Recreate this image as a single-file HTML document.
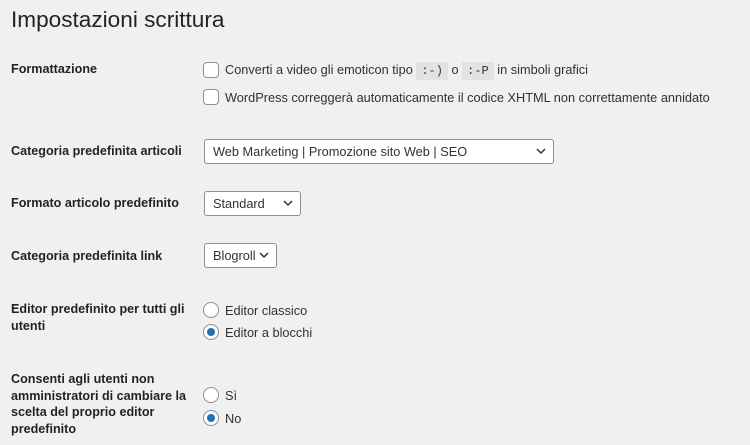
<!DOCTYPE html><html><head><style>
body{margin:0;width:750px;height:445px;background:#f0f0f1;font-family:"Liberation Sans",sans-serif;color:#1d2327;position:relative;overflow:hidden;font-size:12.75px}
.a{position:absolute;white-space:nowrap}
h1{position:absolute;left:11px;top:7px;margin:0;font-size:22.6px;font-weight:400;color:#1d2327}
.l{font-weight:700;font-size:12.6px;color:#1d2327}
.t{color:#2c3338}
.cb{position:absolute;width:14px;height:14px;border:1px solid #8c8f94;border-radius:4px;background:#fff}
.r{position:absolute;width:14px;height:14px;border:1px solid #8c8f94;border-radius:50%;background:#fff}
.r.on::after{content:"";position:absolute;left:3px;top:3px;width:8px;height:8px;border-radius:50%;background:#2271b1}
.s{position:absolute;border:1px solid #8c8f94;border-radius:3px;background:#fff;box-sizing:border-box;height:25px;padding-left:8px;line-height:23px;color:#2c3338}
.s svg{position:absolute;right:7px;top:8px}
code{font-family:"Liberation Mono",monospace;background:#e2e2e3;padding:2px 5px;font-size:12px}
</style></head><body>
<h1>Impostazioni scrittura</h1>
<div class="a l" style="left:11px;top:62px">Formattazione</div>
<div class="cb" style="left:203px;top:62px"></div>
<div class="a t" style="left:225px;top:62px">Converti a video gli emoticon tipo <code>:-)</code> o <code>:-P</code> in simboli grafici</div>
<div class="cb" style="left:203px;top:89px"></div>
<div class="a t" style="left:225px;top:90px">WordPress correggerà automaticamente il codice XHTML non correttamente annidato</div>
<div class="a l" style="left:11px;top:144px">Categoria predefinita articoli</div>
<div class="s" style="left:204px;top:139px;width:350px">Web Marketing | Promozione sito Web | SEO<svg width="10" height="7" viewBox="0 0 10 7"><path d="M1 1l4 4 4-4" fill="none" stroke="#2c3338" stroke-width="1.5"/></svg></div>
<div class="a l" style="left:11px;top:196px">Formato articolo predefinito</div>
<div class="s" style="left:204px;top:191px;width:97px">Standard<svg width="10" height="7" viewBox="0 0 10 7"><path d="M1 1l4 4 4-4" fill="none" stroke="#2c3338" stroke-width="1.5"/></svg></div>
<div class="a l" style="left:11px;top:249px">Categoria predefinita link</div>
<div class="s" style="left:204px;top:243px;width:73px">Blogroll<svg width="10" height="7" viewBox="0 0 10 7"><path d="M1 1l4 4 4-4" fill="none" stroke="#2c3338" stroke-width="1.5"/></svg></div>
<div class="a l" style="left:11px;top:301px;line-height:16.5px">Editor predefinito per tutti gli<br>utenti</div>
<div class="r" style="left:203px;top:302px"></div>
<div class="a t" style="left:225px;top:303px">Editor classico</div>
<div class="r on" style="left:203px;top:324px"></div>
<div class="a t" style="left:225px;top:325px">Editor a blocchi</div>
<div class="a l" style="left:11px;top:371px;line-height:16.5px">Consenti agli utenti non<br>amministratori di cambiare la<br>scelta del proprio editor<br>predefinito</div>
<div class="r" style="left:203px;top:387px"></div>
<div class="a t" style="left:225px;top:388px">Sì</div>
<div class="r on" style="left:203px;top:410px"></div>
<div class="a t" style="left:225px;top:411px">No</div>
</body></html>
